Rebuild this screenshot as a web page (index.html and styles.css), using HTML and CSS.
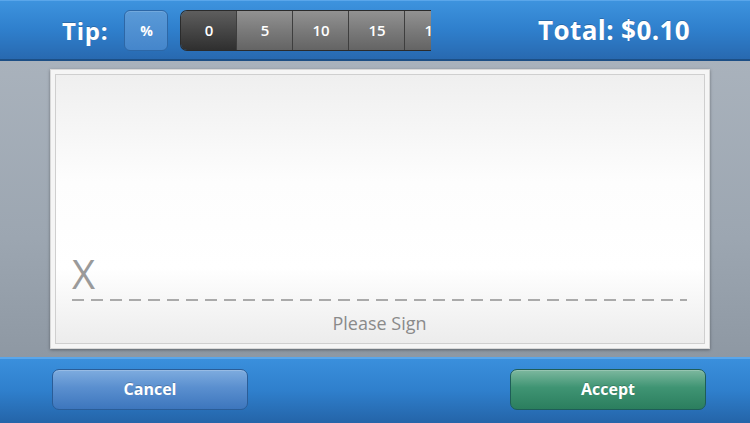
FILE: index.html
```html
<!DOCTYPE html>
<html>
<head>
<meta charset="utf-8">
<link rel="stylesheet" href="styles.css">
</head>
<body>
<div class="app">
  <header class="topbar">
    <span class="tip-label">Tip:</span>
    <button class="pct-btn">%</button>
    <div class="segments">
      <span class="seg active">0</span>
      <span class="seg">5</span>
      <span class="seg">10</span>
      <span class="seg">15</span>
      <span class="seg">18</span>
    </div>
    <span class="total">Total: $0.10</span>
  </header>
  <main class="stage">
    <div class="card">
      <div class="pad">
        <div class="x-mark">X</div>
        <div class="dash"></div>
        <div class="please">Please Sign</div>
      </div>
    </div>
  </main>
  <footer class="bottombar">
    <button class="btn cancel">Cancel</button>
    <button class="btn accept">Accept</button>
  </footer>
</div>
</body>
</html>
```

FILE: styles.css
```css
* { box-sizing: border-box; }
html, body { margin: 0; padding: 0; }
body {
  width: 750px;
  height: 423px;
  overflow: hidden;
  font-family: "Open Sans", "Noto Sans", "DejaVu Sans", sans-serif;
}
.app {
  width: 750px;
  height: 423px;
  display: flex;
  flex-direction: column;
}
.topbar {
  height: 61px;
  flex: none;
  display: flex;
  align-items: center;
  padding: 0 60px 0 62px;
  background: linear-gradient(to bottom, #3d93de 0%, #2f7fcc 50%, #2869b0 100%);
  border-top: 1px solid #5aa6ea;
  border-bottom: 2px solid #1c4f86;
}
.tip-label {
  color: #fff;
  font-size: 24px;
  font-weight: 700;
  letter-spacing: 0.8px;
  margin-right: 16px;
  text-shadow: 0 -1px 0 rgba(0,0,0,0.2);
}
.pct-btn {
  width: 44px;
  height: 41px;
  border-radius: 6px;
  border: 1px solid #2d67a6;
  background: linear-gradient(to bottom, #5a9ad8 0%, #4586cb 100%);
  color: #fff;
  font-family: inherit;
  font-size: 14px;
  font-weight: 700;
  padding: 0;
  margin-right: 12px;
  box-shadow: inset 0 1px 0 rgba(255,255,255,0.15);
}
.segments {
  width: 251px;
  height: 41px;
  display: flex;
  overflow: hidden;
  border-radius: 7px 0 0 7px;
  border: 1px solid #2b2b2b;
  border-right: none;
}
.seg {
  flex: none;
  width: 56px;
  height: 100%;
  display: flex;
  align-items: center;
  justify-content: center;
  color: #fff;
  font-size: 15px;
  font-weight: 600;
  background: linear-gradient(to bottom, #929292 0%, #7a7a7a 50%, #646464 100%);
  border-left: 1px solid #3e3e3e;
}
.seg.active {
  width: 55px;
  border-left: none;
  background: linear-gradient(to bottom, #5e5e5e 0%, #464646 50%, #2f2f2f 100%);
}
.total {
  margin-left: auto;
  color: #fff;
  font-size: 26px;
  font-weight: 700;
  letter-spacing: 0.4px;
  text-shadow: 0 -1px 0 rgba(0,0,0,0.2);
}
.stage {
  flex: 1;
  padding: 8px 40px 8px 50px;
  background: linear-gradient(to bottom, #a9b2bc 0%, #9ca6b1 60%, #8e98a3 100%);
  display: flex;
}
.card {
  width: 660px;
  height: 280px;
  padding: 4px;
  background: #f5f5f5;
  border: 1px solid #d8d8d8;
  box-shadow: 0 1px 3px rgba(0,0,0,0.35);
}
.pad {
  height: 100%;
  border: 1px solid #cfcfcf;
  background: linear-gradient(to bottom, #efefef 0%, #fdfdfd 40%, #ffffff 72%, #ececec 100%);
  display: flex;
  flex-direction: column;
  justify-content: flex-end;
  padding: 0 17px 8px 16px;
}
.x-mark {
  font-size: 40px;
  font-weight: 400;
  line-height: 40px;
  color: #9a9a9a;
  margin-bottom: 5px;
}
.dash {
  height: 2px;
  background: repeating-linear-gradient(to right, #aaaaaa 0 12px, transparent 12px 19px);
  margin-bottom: 10px;
}
.please {
  text-align: center;
  color: #8a8a8a;
  font-size: 18px;
  line-height: 24px;
}
.bottombar {
  height: 66px;
  flex: none;
  display: flex;
  align-items: flex-start;
  justify-content: space-between;
  padding: 10px 44px 0 52px;
  background: linear-gradient(to bottom, #3a8fdc 0%, #2f7fcc 50%, #2464a8 100%);
  border-top: 2px solid #5aa6ea;
}
.btn {
  width: 196px;
  height: 41px;
  border-radius: 7px;
  color: #fff;
  font-family: inherit;
  font-size: 16px;
  font-weight: 700;
  padding: 0 0 2px;
  box-shadow: inset 0 1px 0 rgba(255,255,255,0.2);
  text-shadow: 0 -1px 0 rgba(0,0,0,0.2);
}
.cancel {
  border: 1px solid #2a5d98;
  background: linear-gradient(to bottom, #7eacdf 0%, #5a8fcf 45%, #3d76bd 100%);
}
.accept {
  border: 1px solid #1e5d58;
  background: linear-gradient(to bottom, #7db89f 0%, #3f9473 45%, #2b7e5e 100%);
}
```
